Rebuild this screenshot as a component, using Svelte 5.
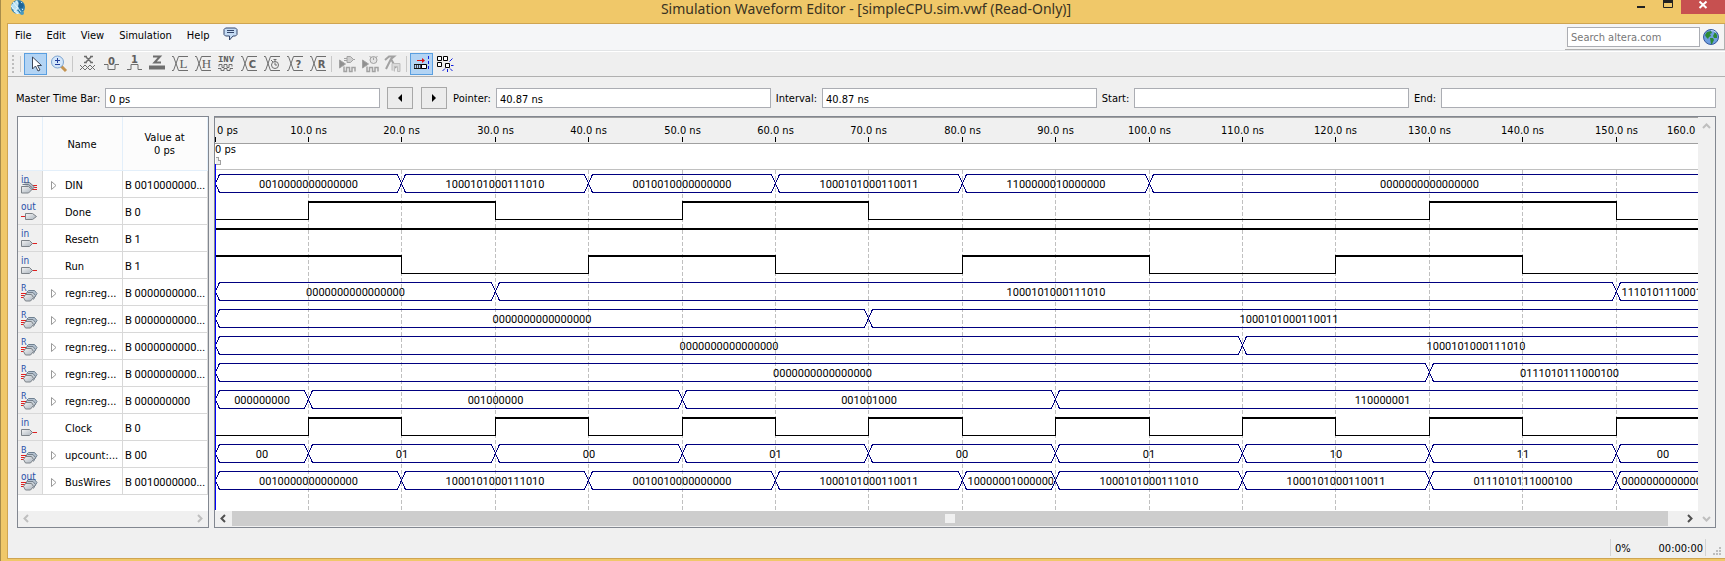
<script>
  const NS = 9.34;
  const END = 160;
  const ROW = 27;
  const TOP = 57;
  const GRID_END = 393;

  const at = (t) => Math.floor(t * NS) + 0.5;

  const A = '1000101000111010';
  const B = '1000101000110011';
  const Z = '0000000000000000';

  const signals = [
    { name: 'DIN', value: 'B 0010000000...', tag: 'in', kind: 'inbus',
      bus: [[0, '0010000000000000'], [20, A], [40, '0010010000000000'], [60, B], [80, '1100000010000000'], [100, Z]] },
    { name: 'Done', value: 'B 0', tag: 'out', kind: 'out', start: 0, edges: [10, 30, 50, 70, 130, 150] },
    { name: 'Resetn', value: 'B 1', tag: 'in', kind: 'in', start: 1, edges: [] },
    { name: 'Run', value: 'B 1', tag: 'in', kind: 'in', start: 1, edges: [20, 40, 60, 80, 100, 120, 140] },
    { name: 'regn:reg...', value: 'B 0000000000...', tag: 'R', kind: 'reg', bus: [[0, Z], [30, A], [150, '1110101110001']] },
    { name: 'regn:reg...', value: 'B 0000000000...', tag: 'R', kind: 'reg', bus: [[0, Z], [70, B]] },
    { name: 'regn:reg...', value: 'B 0000000000...', tag: 'R', kind: 'reg', bus: [[0, Z], [110, A]] },
    { name: 'regn:reg...', value: 'B 0000000000...', tag: 'R', kind: 'reg', bus: [[0, Z], [130, '0111010111000100']] },
    { name: 'regn:reg...', value: 'B 000000000', tag: 'R', kind: 'reg',
      bus: [[0, '000000000'], [10, '001000000'], [50, '001001000'], [90, '110000001']] },
    { name: 'Clock', value: 'B 0', tag: 'in', kind: 'in', start: 0, edges: [10, 20, 30, 40, 50, 60, 70, 80, 90, 100, 110, 120, 130, 140, 150] },
    { name: 'upcount:...', value: 'B 00', tag: 'B', kind: 'reg',
      bus: [[0, '00'], [10, '01'], [30, '00'], [50, '01'], [70, '00'], [90, '01'], [110, '10'], [130, '11'], [150, '00']] },
    { name: 'BusWires', value: 'B 0010000000...', tag: 'out', kind: 'reg',
      bus: [[0, '0010000000000000'], [20, A], [40, '0010010000000000'], [60, B], [80, '1000000100000000'],
            [90, A], [110, B], [130, '0111010111000100'], [150, '0000000000000']] }
  ];

  const ticks = Array.from({ length: 15 }, (_, i) => (i + 1) * 10);

  function segments(bus) {
    return bus.map(([t, text], i) => {
      const x0 = at(t);
      const x1 = at(i + 1 < bus.length ? bus[i + 1][0] : END);
      return { x0, x1, text, tight: x1 - x0 < text.length * 6 + 18 };
    });
  }

  function busPath(s, y) {
    const t = y + 0.5, m = y + 9.5, b = y + 18.5;
    return `M${s.x0} ${m}L${s.x0 + 4} ${t}H${s.x1 - 4}L${s.x1} ${m}L${s.x1 - 4} ${b}H${s.x0 + 4}Z`;
  }

  function levels(sig) {
    const pts = [0, ...sig.edges, END];
    return pts.slice(0, -1).map((t, i) => ({ a: at(t), b: at(pts[i + 1]), high: (i + sig.start) % 2 === 1 }));
  }

  const tools = [
    { id: 'x', label: 'Forcing unknown' }, { id: '0', label: 'Forcing low' }, { id: '1', label: 'Forcing high' },
    { id: 'z', label: 'High impedance' }, { id: 'L', label: 'Weak low' }, { id: 'H', label: 'Weak high' },
    { id: 'inv', label: 'Invert' }, { id: 'C', label: 'Count value' }, { id: 'clk', label: 'Overwrite clock' },
    { id: '?', label: 'Arbitrary value' }, { id: 'R', label: 'Random values' }
  ];
</script>

{#snippet tool(id)}
  <svg width="18" height="18" viewBox="0 0 18 18" fill="none" stroke="#6e6e6e">
    {#if id === 'x'}
      <path d="M5 1.500h3M11 1.500h3M7 2l5 5M12 2L7 7M5 7.500h3M11 7.500h3" stroke-width="1.500" />
      <path d="M1 10l5 5M6 10l-5 5M6 10l5 5M11 10l-5 5M11 10l5 5M16 10l-5 5" />
    {:else if id === '0'}
      <path d="M2 9.500h4v5h7v-5h4" />
      <text x="9.500" y="10" class="g b">0</text>
    {:else if id === '1'}
      <path d="M2 14.500h4v-5h7v5h4" />
      <text x="9.500" y="8" class="g b">1</text>
    {:else if id === 'z'}
      <path d="M5 1.500h7L6.500 7.500H13" stroke-width="2" />
      <path d="M1 12.500h16" stroke-width="4" />
    {:else if id === 'inv'}
      <text x="9" y="7" class="g inv">INV</text>
      <path d="M2 11.500V9.500h3v3h2v-3h3v3h2v-3h3v2M1 13.500h3v2h3v-2h3v2h3v-2h3" />
    {:else}
      <path d="M1 1.500h1.500L7.500 15.500H17M1 15.500h1.500L7.500 1.500H17" />
      {#if id === 'clk'}
        <circle cx="12" cy="10" r="3.500" /><path d="M12 10V7.500M10.500 4.500h3M12 4.500v2M8 5l2 2M12 10h2" />
      {:else}
        <rect x="8" y="3" width="9" height="11" fill="#efefef" stroke="none" />
        <text x="12.500" y="12.500" class={id === 'L' || id === 'H' ? 'g ser' : 'g b'}>{id}</text>
      {/if}
    {/if}
  </svg>
{/snippet}

{#snippet disabled(n)}
  <svg width="18" height="18" viewBox="0 0 18 18" fill="none" stroke="#a2a2a2">
    {#if n < 2}
      <path d="M1.500 5l6 4-6 4z" fill="#909090" />
      <path d="M6 11.500v5h2.500v-4h3v4H14v-4h3v4" stroke-width="1.500" />
      {#if n === 0}
        <path d="M6 3.500h3M6 5.500h3M9 1.500h3.500l3 3-3 3H9zM15 4.500h2" fill="#cfcfcf" />
      {:else}
        <circle cx="12.500" cy="5" r="3.500" fill="#e4e4e4" /><path d="M12.500 5V2.500M8.500 1.500l2 1M16.500 1.500l-2 1" />
      {/if}
    {:else}
      <path d="M1 5l4-3.500h5L7 4l5 9M7 4L2 14" stroke-width="2" />
      <path d="M8 15.500V8.500h8v8h-2.500v-5h-3v5" fill="#dadada" stroke="#bdbdbd" />
    {/if}
  </svg>
{/snippet}

{#snippet pin(tag, kind)}
  <svg class="pin" width="18" height="20" viewBox="0 0 18 20" fill="none">
    {#if kind === 'in'}
      <path d="M12 14.500h5" stroke="#e02020" />
      <path d="M1.500 11.500h8l3 3-3 3h-8z" fill="url(#gate)" stroke="#7c8288" />
    {:else if kind === 'out'}
      <path d="M1 14.500h5" stroke="#e02020" />
      <path d="M5.500 11.500h7l4 3-4 3h-7z" fill="url(#gate)" stroke="#7c8288" />
    {:else if kind === 'inbus'}
      <path d="M12 10.500h5M12 12.500h5M12 14.500h5" stroke="#e02020" />
      <path d="M3.500 7.500h6l5 4.500-3 3M2.500 9.500h6l4 3.500" fill="#b9c1ca" stroke="#6f7a88" />
      <path d="M1.500 11.500h7l3.500 3-3.500 3.500h-7z" fill="url(#gate)" stroke="#7c8288" />
    {:else}
      <path d="M1 10.500h5M1 12.500h5M1 14.500h5" stroke="#e02020" />
      <path d="M6.500 9.500l2-2h6l2.500 3-2.500 4" fill="#b4c2d0" stroke="#6f8090" />
      <path d="M5.500 11.500l2-2h5.500l2.500 3-2 4" fill="#c3ccd4" stroke="#74808c" />
      <path d="M3.500 14.500l2-3h6l2 3-3 3.500h-5z" fill="url(#gate)" stroke="#7c8288" />
    {/if}
    <text x="1" y="8" class={tag.length > 1 ? 'tag' : 'tag one'}>{tag}</text>
  </svg>
{/snippet}

{#snippet chevron(d, color)}
  <svg width="9" height="9" viewBox="0 0 9 9" fill="none" stroke={color} stroke-width="2"><path {d} /></svg>
{/snippet}

<div class="window">
  <header class="title">
    <svg class="logo" width="16" height="16" viewBox="0 0 16 16">
      <circle cx="8" cy="7" r="7" fill="#2d7fb0" />
      <path d="M1 5l6-5 3 5-3 6-5-2zM3 10l5 1 2 3-4 0z" fill="#b8e0f2" />
      <path d="M3 2l8 10M1 6l7 8M6 1l7 9M12 2L4 12" stroke="#e6f6fc" fill="none" />
      <path d="M9 1l5 4-2 4-4-2z" fill="#1f6496" />
      <circle cx="12" cy="13" r="2" fill="#4a9ac0" />
    </svg>
    <h1>Simulation Waveform Editor - [simpleCPU.sim.vwf (Read-Only)]</h1>
    <div class="controls">
      <button aria-label="Minimize"><svg width="10" height="10" viewBox="0 0 10 10"><path d="M1 6h8v2H1z" fill="#222" /></svg></button>
      <button aria-label="Maximize"><svg width="10" height="10" viewBox="0 0 10 10"><path d="M0.500 0v7.500h9V0M0 1.500h10" fill="none" stroke="#222" /><path d="M0 0h10v3H0z" fill="#222" /></svg></button>
      <button class="close" aria-label="Close"><svg width="10" height="10" viewBox="0 0 10 10"><path d="M1.500 1.500l7 6.500M8.500 1.500l-7 6.500" stroke="#fff" stroke-width="2" /></svg></button>
    </div>
  </header>

  <div class="client">
    <div class="menubar">
      <nav>
        <button>File</button><button>Edit</button><button>View</button><button>Simulation</button><button>Help</button>
        <button aria-label="Feedback">
          <svg width="15" height="14" viewBox="0 0 15 14"><path d="M2.500 1h10l1.500 1.500v5L12.500 9H10l-3.500 4V9h-4L1 7.500v-5z" fill="#c6dcf4" stroke="#34466c" /><path d="M4 3.500h7M4 5.500h7" stroke="#34466c" /></svg>
        </button>
      </nav>
      <form class="search">
        <input type="text" placeholder="Search altera.com" aria-label="Search altera.com" />
        <button type="button" aria-label="Go">
          <svg width="16" height="16" viewBox="0 0 16 16">
            <circle cx="8" cy="8" r="7.500" fill="#6f9ee0" stroke="#35589c" />
            <path d="M2 6l2-3 4-1 1 2-2 1 1 2-2 1-1 2-2-2zM7 9h3l1 2-2 4H8zM12 3l2 3v3h-3l-1-2z" fill="#2c8a35" />
            <path d="M8 1.500a7 6 0 0 1 5 2" stroke="#c5dbf6" fill="none" />
          </svg>
        </button>
      </form>
    </div>

    <div class="toolbar">
      <i class="grip"></i><i class="sep first"></i>
      <button class="on" aria-label="Selection tool">
        <svg width="18" height="18" viewBox="0 0 18 18"><path d="M5.500 2v12l3-3 2.500 5 2-1-2.500-4.500h4z" fill="#fff" stroke="#3d4658" /></svg>
      </button>
      <button aria-label="Zoom tool">
        <svg width="18" height="18" viewBox="0 0 18 18"><path d="M11 11l5 5" stroke="#c49452" stroke-width="3" /><circle cx="7.500" cy="7" r="6" fill="#d3e6fa" stroke="#7ba3cf" /><path d="M5 5.500h5M7.500 3v5M5 9.500h5" stroke="#24409c" /></svg>
      </button>
      <i class="sep"></i>
      {#each tools as t}
        <button aria-label={t.label}>{@render tool(t.id)}</button>
      {/each}
      <i class="sep"></i>
      <button disabled aria-label="Run functional simulation">{@render disabled(0)}</button>
      <button disabled aria-label="Run timing simulation">{@render disabled(1)}</button>
      <button disabled aria-label="Generate testbench">{@render disabled(2)}</button>
      <i class="sep"></i>
      <button class="on" aria-label="Snap to transition">
        <svg width="18" height="18" viewBox="0 0 18 18" fill="none"><path d="M4 5.500h6" stroke="#e01010" /><path d="M9 3l3 2.500L9 8z" fill="#e01010" /><path d="M15.500 1v15" stroke="#1020e0" stroke-dasharray="3 2" /><path d="M1 9.500h8M1 13.500h8" stroke="#111" /><path d="M1 11.500h8" stroke="#445" stroke-width="3" stroke-dasharray="1 1" /><path d="M8.500 9.500h5v4h-5z" fill="#fff" stroke="#000" /></svg>
      </button>
      <button aria-label="Snap to grid">
        <svg width="18" height="18" viewBox="0 0 18 18" fill="none"><path d="M1.500 1.500h4v4h-4zM7.500 1.500h4v4h-4zM1.500 7.500h4v4h-4zM9.500 8.500h4v4h-4z" fill="#fff" stroke="#000" /><path d="M13.500 6.500l3-3M15 10.500h2.500M14 13.500l2.500 2.500M11.500 14v3M9 13.500L6.500 16" stroke="#1020e0" /></svg>
      </button>
    </div>

    <div class="timebar">
      <label for="master">Master Time Bar:</label><input id="master" type="text" value="0 ps" />
      <div class="steps">
        <button aria-label="Previous transition"><svg width="6" height="8" viewBox="0 0 6 8"><path d="M5 0v8L1 4z" /></svg></button>
        <button aria-label="Next transition"><svg width="6" height="8" viewBox="0 0 6 8"><path d="M1 0v8l4-4z" /></svg></button>
      </div>
      <label for="pointer">Pointer:</label><input id="pointer" type="text" value="40.87 ns" />
      <label for="interval">Interval:</label><input id="interval" type="text" value="40.87 ns" />
      <label for="start">Start:</label><input id="start" type="text" />
      <label for="end">End:</label><input id="end" type="text" />
    </div>

    <main>
      <section class="signals">
        <table>
          <colgroup><col class="c-icon" /><col class="c-name" /><col /></colgroup>
          <thead><tr><th></th><th>Name</th><th>Value at<br />0 ps</th></tr></thead>
          <tbody>
            {#each signals as s}
              <tr>
                <td class="kind">{@render pin(s.tag, s.kind)}</td>
                <td>
                  <div class="name">
                    {#if s.bus}
                      <button aria-label="Expand {s.name}"><svg width="6" height="9" viewBox="0 0 6 9"><path d="M0.500 0.500v8l4.500-4z" fill="#fff" stroke="#999" /></svg></button>
                    {/if}
                    <span>{s.name}</span>
                  </div>
                </td>
                <td class="value">{s.value}</td>
              </tr>
            {/each}
          </tbody>
        </table>
        <div class="hscroll idle">
          {@render chevron('M6 1L2.500 4.500L6 8', '#bfbfbf')}
          {@render chevron('M3 1L6.500 4.500L3 8', '#bfbfbf')}
        </div>
      </section>

      <section class="waves">
        <div class="canvas">
          <svg class="plot" width="100%" height="100%">
            <defs>
              <linearGradient id="gate" x1="0" y1="0" x2="1" y2="1"><stop offset="0" stop-color="#f4f4f4" /><stop offset="1" stop-color="#aab4be" /></linearGradient>
            </defs>
            <rect width="100%" height="26" fill="#f0f0f0" />
            <path d="M0 0.500h4000M0 26.500h4000" stroke="#a0a0a0" />
            <path d="M0 52.500h4000" stroke="#c0c0c0" />
            <path d="M0.500 20v5" stroke="#000" />
            <text x="2" y="17">0 ps</text>
            <text x="0" y="36">0 ps</text>
            <path d="M1 40.500h2.500v3h1.500v4H1" fill="#f0f0f0" stroke="#a0a0a0" />
            {#each ticks as t}
              <text x={at(t)} y="17" class="mid">{t}.0 ns</text>
              <path d="M{at(t)} 20v5" stroke="#000" />
              <path d="M{at(t)} 53V{GRID_END}" stroke="#c0c0c0" stroke-dasharray="4 2" />
            {/each}
            <text x="1452" y="17">{END}.0 ns</text>
            {#each signals as s, i}
              {@const y = TOP + i * ROW}
              {#if s.bus}
                {#each segments(s.bus) as seg}
                  <path d={busPath(seg, y)} fill="none" stroke="#000080" />
                  {#if seg.tight}
                    <svg x={seg.x0 + 4} {y} width={seg.x1 - seg.x0 - 6} height="19"><text x="1" y="14" class="bits">{seg.text}</text></svg>
                  {:else}
                    <text x={(seg.x0 + seg.x1) / 2} y={y + 14} class="mid bits">{seg.text}</text>
                  {/if}
                {/each}
              {:else}
                {#each levels(s) as l, k}
                  {#if l.high}
                    <path d="M{l.a} {y + 1}H{l.b}" stroke="#000" stroke-width="2" />
                  {:else}
                    <path d="M{l.a} {y + 18.5}H{l.b}" stroke="#000" />
                  {/if}
                  {#if k > 0}<path d="M{l.a} {y}v19" stroke="#000" />{/if}
                {/each}
              {/if}
            {/each}
            <path d="M0.500 47V{GRID_END}" stroke="#0000ff" />
          </svg>
          <div class="hscroll">
            <button aria-label="Scroll left">{@render chevron('M6 1L2.500 4.500L6 8', '#505050')}</button>
            <div class="thumb"><i></i></div>
            <button class="far" aria-label="Scroll right">{@render chevron('M3 1L6.500 4.500L3 8', '#505050')}</button>
          </div>
        </div>
        <div class="vscroll">
          {@render chevron('M1 6L4.500 2.500L8 6', '#bfbfbf')}
          {@render chevron('M1 3L4.500 6.500L8 3', '#bfbfbf')}
        </div>
      </section>
    </main>

    <footer>
      <div class="status"><span>0%</span><span>00:00:00</span></div>
      <svg width="10" height="10" viewBox="0 0 10 10"><path d="M7 1h2v2H7zM4 4h2v2H4zM7 4h2v2H7zM1 7h2v2H1zM4 7h2v2H4zM7 7h2v2H7z" fill="#bdbdbd" /></svg>
    </footer>
  </div>
</div>

<style>
  :global(body) { background: #f0c869; }
  .window {
    display: flex;
    flex-direction: column;
    box-sizing: border-box;
    min-height: 100vh;
    border-left: 1px solid #a88c4a;
    padding: 0 0 2px 6px;
    background: #f0c869;
    color: #000;
    font: 11px/13px "DejaVu Sans Condensed", "DejaVu Sans", sans-serif;
  }
  button { display: flex; align-items: center; justify-content: center; padding: 0; border: 0; background: none; color: inherit; font: inherit; }
  input { box-sizing: border-box; min-width: 0; height: 20px; padding: 2px 3px 0; border: 1px solid #abadb3; background: #fff; color: #000; font: inherit; }
  svg { display: block; flex: none; }

  .title { display: grid; grid-template-columns: 1fr auto 1fr; height: 23px; }
  .logo { margin-left: 3px; }
  h1 { margin: 0; color: #3a3322; font: 14px/18px "Noto Sans", "Open Sans", sans-serif; }
  .controls { display: flex; justify-content: flex-end; }
  .controls button { width: 27px; height: 14px; align-items: flex-start; }
  .controls .close { width: 44px; background: #c75050; }

  .client { display: flex; flex: 1; flex-direction: column; border: 1px solid #cfa552; border-right: 0; background: #f0f0f0; }

  .menubar { display: flex; justify-content: space-between; height: 26px; border-bottom: 1px solid #e2e4e6; background: #f5f6f8; }
  nav { display: flex; align-items: flex-start; }
  nav button { height: 22px; padding: 0 8px 0 7px; }
  nav button:last-child { height: 20px; padding: 0 6px; }
  .search { display: flex; align-items: center; gap: 3px; margin: 0; padding: 0 5px 0 2px; border-right: 1px solid #b0b0b0; border-bottom: 1px solid #b0b0b0; background: #f4f4f4; }
  .search input { width: 133px; }
  .search input::placeholder { color: #777; opacity: 1; }

  .toolbar { display: flex; align-items: center; height: 24px; border-top: 1px solid #fff; border-bottom: 1px solid #b0b0b0; background: #efefef; }
  .toolbar button { box-sizing: border-box; width: 23px; height: 22px; }
  .toolbar .on { border: 1px solid #5a9fe0; background: #b3d4f4; }
  .grip { width: 2px; height: 18px; margin-left: 4px; background: repeating-linear-gradient(#bdbdbd 0 2px, transparent 2px 4px); }
  .sep { box-sizing: border-box; width: 6px; height: 16px; border-left: 1px solid #c8c8c8; margin-left: 2px; margin-right: -2px; }
  .sep.first { margin-left: 6px; }
  .g { fill: #606060; stroke: none; text-anchor: middle; font: 10px "DejaVu Sans", sans-serif; }
  .b { font-weight: bold; }
  .ser { font: 13px "Liberation Serif", serif; }
  .inv { font: bold 9px "Liberation Mono", monospace; }

  .timebar { display: flex; align-items: center; gap: 5px; padding: 10px 9px 7px 8px; }
  .timebar input { flex: 1 1 0; }
  .steps { display: flex; gap: 8px; margin: 0 1px 0 2px; }
  .steps button { box-sizing: border-box; width: 26px; height: 22px; border: 1px solid #a8a8a8; background: #ececec; }

  main { display: flex; flex: 1; gap: 5px; padding: 0 9px; }
  .signals { display: flex; box-sizing: border-box; flex: none; flex-direction: column; justify-content: space-between; width: 192px; border: 1px solid #828790; background: #fff; }
  table { width: 100%; border-collapse: separate; border-spacing: 0; table-layout: fixed; }
  .c-icon { width: 25px; }
  .c-name { width: 80px; }
  th { box-sizing: border-box; height: 54px; padding: 1px 1px 0 0; border-right: 1px solid #e3effa; border-bottom: 1px solid #e3effa; background: #fcfcfc; font-weight: normal; }
  td { box-sizing: border-box; height: 27px; padding: 2px 0 0; border-right: 1px solid #d8d8d8; border-bottom: 1px solid #d8d8d8; white-space: nowrap; overflow: hidden; }
  .kind { background: #f0f0f0; }
  .pin { margin-left: 2px; }
  .tag { fill: #2a4fa8; font: 10px "DejaVu Sans Condensed", sans-serif; }
  .one { font-size: 9px; }
  .name { display: flex; align-items: center; justify-content: flex-end; gap: 8px; }
  .name span { width: 57px; }
  .value { padding-left: 2px; font-family: Roboto, sans-serif; }
  .bits { font-family: Roboto, sans-serif; }

  .hscroll { display: flex; align-items: flex-start; height: 16px; background: #f0f0f0; }
  .idle { box-sizing: border-box; justify-content: space-between; padding: 3px 4px 0; }
  .hscroll button { width: 17px; height: 15px; }
  .hscroll .far { width: 17px; margin-left: 13px; }
  .thumb { display: flex; flex: 1; align-items: center; justify-content: center; height: 15px; background: #cdcdcd; }
  .thumb i { width: 10px; height: 9px; background: #f0f0f0; }

  .waves { display: flex; flex: 1; min-width: 0; border: 1px solid #828790; background: #fff; }
  .canvas { display: flex; flex: 1; flex-direction: column; min-width: 0; }
  .plot { flex: 1; min-height: 394px; height: auto; shape-rendering: crispEdges; }
  .plot .mid { text-anchor: middle; }
  .vscroll { display: flex; flex-direction: column; align-items: center; justify-content: space-between; width: 17px; padding: 5px 0 4px; background: #f0f0f0; }

  footer { display: flex; align-items: flex-end; justify-content: flex-end; gap: 6px; height: 30px; }
  footer > svg { margin: 0 3px 2px 0; }
  .status { display: flex; justify-content: space-between; box-sizing: border-box; width: 96px; margin-bottom: 2px; padding: 3px 2px 1px 4px; border: solid #d4d4d4; border-width: 0 1px; }
</style>
